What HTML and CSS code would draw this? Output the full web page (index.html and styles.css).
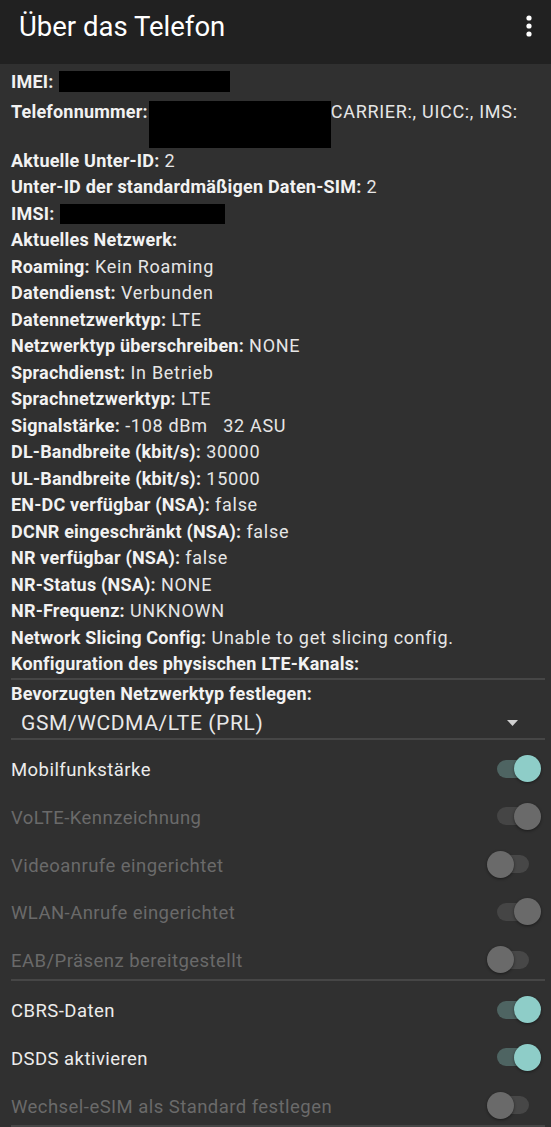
FILE: index.html
```html
<!DOCTYPE html>
<html lang="de">
<head>
<meta charset="utf-8">
<title>Über das Telefon</title>
<link rel="stylesheet" href="styles.css">
</head>
<body>
<header class="appbar">
  <h1 class="title">Über das Telefon</h1>
  <svg class="menu" width="10" height="26" viewBox="0 0 10 26"><circle cx="5" cy="5" r="2.6" fill="#fff"/><circle cx="5" cy="13" r="2.6" fill="#fff"/><circle cx="5" cy="21" r="2.6" fill="#fff"/></svg>
</header>
<main class="content">
  <section class="info">
    <div class="line line-first"><b>IMEI:</b> <span class="redact imei"></span></div>
    <div class="line"><b>Telefonnummer:</b><span class="redact phone"></span>CARRIER:, UICC:, IMS:</div>
    <div class="line"><b>Aktuelle Unter-ID:</b> 2</div>
    <div class="line"><b>Unter-ID der standardmäßigen Daten-SIM:</b> 2</div>
    <div class="line"><b>IMSI:</b> <span class="redact imsi"></span></div>
    <div class="line"><b>Aktuelles Netzwerk:</b></div>
    <div class="line"><b>Roaming:</b> Kein Roaming</div>
    <div class="line"><b>Datendienst:</b> Verbunden</div>
    <div class="line"><b>Datennetzwerktyp:</b> LTE</div>
    <div class="line"><b>Netzwerktyp überschreiben:</b> NONE</div>
    <div class="line"><b>Sprachdienst:</b> In Betrieb</div>
    <div class="line"><b>Sprachnetzwerktyp:</b> LTE</div>
    <div class="line"><b>Signalstärke:</b> -108 dBm&nbsp;&nbsp;&nbsp;32 ASU</div>
    <div class="line"><b>DL-Bandbreite (kbit/s):</b> 30000</div>
    <div class="line"><b>UL-Bandbreite (kbit/s):</b> 15000</div>
    <div class="line"><b>EN-DC verfügbar (NSA):</b> false</div>
    <div class="line"><b>DCNR eingeschränkt (NSA):</b> false</div>
    <div class="line"><b>NR verfügbar (NSA):</b> false</div>
    <div class="line"><b>NR-Status (NSA):</b> NONE</div>
    <div class="line"><b>NR-Frequenz:</b> UNKNOWN</div>
    <div class="line"><b>Network Slicing Config:</b> Unable to get slicing config.</div>
    <div class="line"><b>Konfiguration des physischen LTE-Kanals:</b></div>
  </section>
  <hr class="divider">
  <section class="pref">
    <div class="line"><b>Bevorzugten Netzwerktyp festlegen:</b></div>
    <div class="spinner">
      <span class="spinner-text">GSM/WCDMA/LTE (PRL)</span>
      <svg class="caret" width="11" height="6" viewBox="0 0 11 6"><path d="M0 0H11L5.5 6Z" fill="#d0d0d0"/></svg>
    </div>
  </section>
  <hr class="divider">
  <section class="toggles">
    <div class="row"><span class="label">Mobilfunkstärke</span><span class="switch on"></span></div>
    <div class="row disabled"><span class="label">VoLTE-Kennzeichnung</span><span class="switch on"></span></div>
    <div class="row disabled"><span class="label">Videoanrufe eingerichtet</span><span class="switch"></span></div>
    <div class="row disabled"><span class="label">WLAN-Anrufe eingerichtet</span><span class="switch on"></span></div>
    <div class="row disabled"><span class="label">EAB/Präsenz bereitgestellt</span><span class="switch"></span></div>
  </section>
  <hr class="divider">
  <section class="toggles">
    <div class="row"><span class="label">CBRS-Daten</span><span class="switch on"></span></div>
    <div class="row"><span class="label">DSDS aktivieren</span><span class="switch on"></span></div>
    <div class="row disabled"><span class="label">Wechsel-eSIM als Standard festlegen</span><span class="switch"></span></div>
  </section>
  <hr class="divider">
</main>
</body>
</html>
```
FILE: styles.css
```css
* { box-sizing: border-box; }
html, body {
  margin: 0;
  padding: 0;
  background: #303030;
}
body {
  font-family: Roboto, "Noto Sans", sans-serif;
  color: #e6e6e6;
  width: 551px;
  height: 1127px;
  overflow: hidden;
}
.appbar {
  height: 64px;
  background: #212121;
  display: flex;
  align-items: center;
  justify-content: space-between;
  padding: 0 17px 12px 19px;
}
.title {
  margin: 0;
  font-size: 27.5px;
  font-weight: 400;
  color: #ffffff;
  letter-spacing: 0;
}
.menu { display: block; }
.content {
  padding: 0 6px 0 11px;
}
.info { padding-top: 5px; }
.line {
  font-size: 18px;
  line-height: 26.5px;
  white-space: nowrap;
  color: #e6e6e6;
  letter-spacing: 0.7px;
}
.line-first { padding-bottom: 3px; }
.line b {
  font-weight: 700;
  color: #f2f2f2;
  letter-spacing: 0.2px;
}
.redact {
  display: inline-block;
  background: #000;
}
.imei { width: 171px; height: 21px; vertical-align: -4px; }
.imsi { width: 165px; height: 20px; vertical-align: -4px; }
.phone {
  width: 182px;
  height: 47px;
  vertical-align: top;
  margin-top: 2px;
  margin-left: 1px;
}
.divider {
  border: 0;
  height: 2px;
  background: #464646;
  margin: 0;
}
.pref { padding-top: 1px; }
.spinner {
  display: flex;
  align-items: center;
  justify-content: space-between;
  padding: 0 27px 0 10px;
  height: 31px;
}
.spinner-text {
  font-size: 21px;
  letter-spacing: 0.6px;
  color: #e8e8e8;
}
.caret { display: block; }
.toggles {
  padding-top: 12px;
  display: flex;
  flex-direction: column;
  gap: 11.75px;
}
.row {
  height: 36px;
  display: flex;
  align-items: center;
  justify-content: space-between;
  padding-right: 16px;
}
.label {
  font-size: 18.5px;
  letter-spacing: 0.45px;
  color: #ececec;
}
.row.disabled .label { color: #6a6a6a; }
.switch {
  position: relative;
  width: 32px;
  height: 18px;
  border-radius: 9px;
  background: #474747;
  margin-top: -3px;
}
.switch::after {
  content: "";
  position: absolute;
  top: -4.5px;
  left: -10px;
  width: 27px;
  height: 27px;
  border-radius: 50%;
  background: #6a6a6a;
  box-shadow: 0 1px 3px rgba(0,0,0,0.45);
}
.switch.on::after { left: 16.5px; }
.row:not(.disabled) .switch.on { background: #4e6462; }
.row:not(.disabled) .switch.on::after { background: #8ecdc8; }
.row.disabled .switch.on { background: #454545; }
```
